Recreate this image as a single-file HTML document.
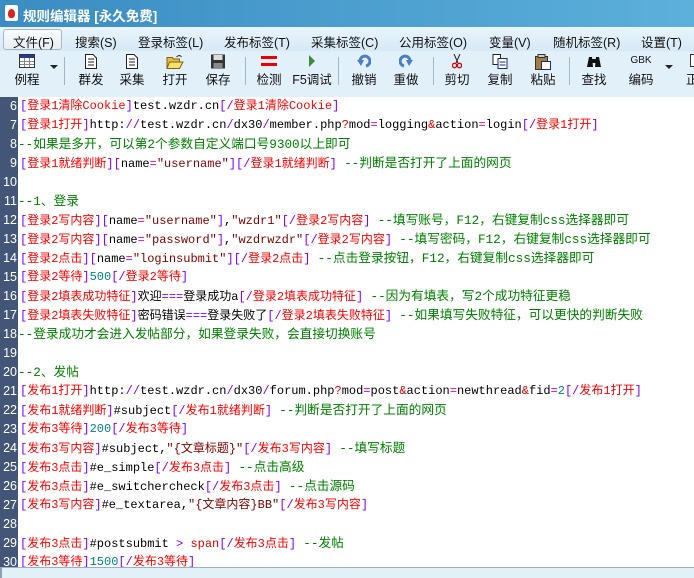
<!DOCTYPE html>
<html><head><meta charset="utf-8">
<style>
*{margin:0;padding:0;box-sizing:border-box}
body{width:694px;height:578px;overflow:hidden;background:#fff;font-family:"Liberation Sans","Noto Sans CJK SC",sans-serif;position:relative}
#title{position:absolute;left:0;top:0;width:694px;height:27px;background:linear-gradient(90deg,#3a8cc2,#5cb0da);color:#fff;font-weight:bold;font-size:13.5px}
#title .ic{position:absolute;left:5px;top:5px;width:13px;height:16px;background:#fff;border-radius:2px}
#title .ic:after{content:"";position:absolute;left:3px;top:4px;width:7px;height:9px;background:#d22;border-radius:50% 50% 40% 40%}
#title span{position:absolute;left:23px;top:5px}
#menu{position:absolute;left:0;top:27px;width:694px;height:24px;background:linear-gradient(#eaf4fb,#d6e9f6);font-size:12.5px;color:#111}
#menu span{position:absolute;top:5px;white-space:nowrap}
#menu .sel{position:absolute;left:3px;top:2px;width:59px;height:21px;border:1px solid #a9b6c2;border-radius:3px;background:linear-gradient(#fafcfe,#e8eef3)}
#tool{position:absolute;left:0;top:51px;width:694px;height:46px;background:#e2f0f9;font-size:12.5px;color:#111}
#tool .l{position:absolute;top:18px;white-space:nowrap;transform:translateX(-50%)}
#tool .i{position:absolute;top:3px;transform:translateX(-50%)}
#tool .sep{position:absolute;top:6px;width:1px;height:28px;background:#9fb6c8}
#tool .dd{position:absolute;top:14px;width:0;height:0;border-left:4px solid transparent;border-right:4px solid transparent;border-top:4px solid #222}
#ed{position:absolute;left:0;top:97px;width:694px;height:470px;background:#fff;overflow:hidden}
#gut{position:absolute;left:0;top:0;width:18px;height:470px;background:#435678}
.ln{position:absolute;left:0;height:19px;line-height:19px;font-family:"Liberation Mono","Noto Sans CJK SC",monospace;font-size:12px;white-space:pre}
.ln .no{position:absolute;left:0;width:17px;text-align:right;color:#fff;font-family:"Liberation Sans",sans-serif;font-size:12.5px}
.ln .tx{position:absolute;left:20px}
.b{color:#8000ff}.r{color:#f00}.k{color:#000}.s{color:#800000}.g{color:#008000;font-size:12.7px}.n{color:#008080}.p{color:#e000e0}.q{color:#e00000}
#bot{position:absolute;left:0;top:567px;width:694px;height:11px;background:#e2f0f8;border-top:1px solid #9db0c0;border-left:2px solid #8da0b0;overflow:hidden}
#bot span{position:absolute;top:8px;left:10px;font-size:12px;color:#555;white-space:pre}
</style></head><body>
<div id="title"><div class="ic"></div><span>规则编辑器 [永久免费]</span></div>
<div id="menu"><div class="sel"></div>
<span style="left:13px">文件(F)</span><span style="left:75px">搜索(S)</span><span style="left:138px">登录标签(L)</span><span style="left:224px">发布标签(T)</span><span style="left:311px">采集标签(C)</span><span style="left:399px">公用标签(O)</span><span style="left:489px">变量(V)</span><span style="left:553px">随机标签(R)</span><span style="left:641px">设置(T)</span></div>
<div id="tool">
<svg class="i" style="left:27px" width="16" height="14"><rect x="0.5" y="0.5" width="15" height="13" fill="#fff" stroke="#333"/><rect x="1" y="1" width="14" height="3" fill="#2a3a8a"/><path d="M1 7.5H15M1 10.5H15M5.5 4V13M10.5 4V13" stroke="#888"/></svg>
<span class="l" style="left:27px">例程</span><div class="dd" style="left:50px"></div><div class="sep" style="left:64px"></div>
<svg class="i" style="left:91px" width="12" height="15"><path d="M0.5 0.5H8L11.5 4V14.5H0.5Z" fill="#fff" stroke="#222"/><path d="M3 5H9M3 8H9M3 11H9" stroke="#222"/></svg><span class="l" style="left:91px">群发</span>
<svg class="i" style="left:132px" width="12" height="15"><path d="M0.5 0.5H8L11.5 4V14.5H0.5Z" fill="#fff" stroke="#222"/><path d="M3 5H9M3 8H9M3 11H9" stroke="#222"/></svg><span class="l" style="left:132px">采集</span>
<svg class="i" style="left:175px" width="17" height="15"><path d="M0.5 3.5H6L7 5H13V14.5H0.5Z" fill="#e8c040" stroke="#806010"/><path d="M3 8H16.5L13 14.5H0.5Z" fill="#f6e070" stroke="#806010"/><path d="M10 3Q13 0 15 3" stroke="#333" fill="none"/></svg><span class="l" style="left:175px">打开</span>
<svg class="i" style="left:218px" width="15" height="15"><rect x="0.5" y="0.5" width="14" height="14" fill="#333"/><rect x="3" y="1" width="9" height="5" fill="#ddd"/><rect x="3" y="9" width="9" height="5" fill="#888"/></svg><span class="l" style="left:218px">保存</span>
<div class="sep" style="left:245px"></div>
<svg class="i" style="left:269px" width="16" height="14"><rect x="0" y="2" width="16" height="3" fill="#e00"/><rect x="0" y="9" width="16" height="3" fill="#e00"/></svg><span class="l" style="left:269px">检测</span>
<svg class="i" style="left:312px" width="8" height="14"><path d="M1 1L7 7L1 13Z" fill="#3a8a3a"/></svg><span class="l" style="left:312px">F5调试</span>
<div class="sep" style="left:338px"></div>
<svg class="i" style="left:364px" width="14" height="14"><path d="M3 8A5 5 0 1 1 9 12" stroke="#4a7ec8" stroke-width="3" fill="none"/><path d="M0 6L4 12L7 6Z" fill="#4a7ec8"/></svg><span class="l" style="left:364px">撤销</span>
<svg class="i" style="left:406px" width="14" height="14"><path d="M11 8A5 5 0 1 0 5 12" stroke="#4a7ec8" stroke-width="3" fill="none"/><path d="M14 6L10 12L7 6Z" fill="#4a7ec8"/></svg><span class="l" style="left:406px">重做</span>
<div class="sep" style="left:433px"></div>
<svg class="i" style="left:457px" width="10" height="15"><path d="M2 0L6 9M8 0L4 9" stroke="#222"/><circle cx="2.5" cy="11.5" r="2.2" fill="none" stroke="#d00" stroke-width="1.3"/><circle cx="7.5" cy="11.5" r="2.2" fill="none" stroke="#d00" stroke-width="1.3"/></svg><span class="l" style="left:457px">剪切</span>
<svg class="i" style="left:500px" width="15" height="15"><path d="M0.5 0.5H8V10.5H0.5Z" fill="#fff" stroke="#222"/><path d="M5.5 4.5H14.5V14.5H5.5Z" fill="#fff" stroke="#1a2a8a"/><path d="M7 8H13M7 11H13" stroke="#1a2a8a"/></svg><span class="l" style="left:500px">复制</span>
<svg class="i" style="left:543px" width="16" height="16"><rect x="0.5" y="2.5" width="12" height="13" fill="#a08040" stroke="#333"/><rect x="3" y="0.5" width="7" height="3" fill="#ccc" stroke="#333"/><path d="M6.5 7.5H15.5V15.5H6.5Z" fill="#fff" stroke="#1a2a8a"/></svg><span class="l" style="left:543px">粘贴</span>
<div class="sep" style="left:569px"></div>
<svg class="i" style="left:594px" width="16" height="14"><path d="M1 13L3 3H6L7 13ZM9 13L10 3H13L15 13Z" fill="#111"/><rect x="5" y="5" width="6" height="4" fill="#111"/></svg><span class="l" style="left:594px">查找</span>
<span class="i" style="left:641px;top:4px;font-size:10px">GBK</span><span class="l" style="left:641px">编码</span><div class="dd" style="left:665px"></div>
<svg class="i" style="left:690px;transform:none" width="6" height="14"><rect x="0.5" y="0.5" width="8" height="12" fill="#fff" stroke="#333"/></svg><span class="l" style="left:686px;transform:none">正</span>
</div>
<div id="ed"><div id="gut"></div>
<div class="ln" style="top:0"><span class="no">6</span><span class="tx"><span class="b">[</span><span class="r">登录1清除Cookie</span><span class="b">]</span><span class="k">test.wzdr.cn</span><span class="b">[/</span><span class="r">登录1清除Cookie</span><span class="b">]</span></span></div>
<div class="ln" style="top:19px"><span class="no">7</span><span class="tx"><span class="b">[</span><span class="r">登录1打开</span><span class="b">]</span><span class="k">http:</span><span class="b">//</span><span class="k">test.wzdr.cn</span><span class="b">/</span><span class="k">dx30</span><span class="b">/</span><span class="k">member.php</span><span class="q">?</span><span class="k">mod</span><span class="p">=</span><span class="k">logging</span><span class="q">&amp;</span><span class="k">action</span><span class="p">=</span><span class="k">login</span><span class="b">[/</span><span class="r">登录1打开</span><span class="b">]</span></span></div>
<div class="ln" style="top:38px"><span class="no">8</span><span class="tx" style="left:18px"><span class="g">--如果是多开，可以第2个参数自定义端口号9300以上即可</span></span></div>
<div class="ln" style="top:57px"><span class="no">9</span><span class="tx"><span class="b">[</span><span class="r">登录1就绪判断</span><span class="b">][</span><span class="k">name</span><span class="p">=</span><span class="s">"username"</span><span class="b">][/</span><span class="r">登录1就绪判断</span><span class="b">]</span> <span class="g">--判断是否打开了上面的网页</span></span></div>
<div class="ln" style="top:76px"><span class="no">10</span></div>
<div class="ln" style="top:95px"><span class="no">11</span><span class="tx" style="left:18px"><span class="g">--1、登录</span></span></div>
<div class="ln" style="top:114px"><span class="no">12</span><span class="tx"><span class="b">[</span><span class="r">登录2写内容</span><span class="b">][</span><span class="k">name</span><span class="p">=</span><span class="s">"username"</span><span class="b">]</span><span class="k">,</span><span class="s">"wzdr1"</span><span class="b">[/</span><span class="r">登录2写内容</span><span class="b">]</span> <span class="g">--填写账号，F12，右键复制css选择器即可</span></span></div>
<div class="ln" style="top:133px"><span class="no">13</span><span class="tx"><span class="b">[</span><span class="r">登录2写内容</span><span class="b">][</span><span class="k">name</span><span class="p">=</span><span class="s">"password"</span><span class="b">]</span><span class="k">,</span><span class="s">"wzdrwzdr"</span><span class="b">[/</span><span class="r">登录2写内容</span><span class="b">]</span> <span class="g">--填写密码，F12，右键复制css选择器即可</span></span></div>
<div class="ln" style="top:152px"><span class="no">14</span><span class="tx"><span class="b">[</span><span class="r">登录2点击</span><span class="b">][</span><span class="k">name</span><span class="p">=</span><span class="s">"loginsubmit"</span><span class="b">][/</span><span class="r">登录2点击</span><span class="b">]</span> <span class="g">--点击登录按钮，F12，右键复制css选择器即可</span></span></div>
<div class="ln" style="top:171px"><span class="no">15</span><span class="tx"><span class="b">[</span><span class="r">登录2等待</span><span class="b">]</span><span class="n">500</span><span class="b">[/</span><span class="r">登录2等待</span><span class="b">]</span></span></div>
<div class="ln" style="top:190px"><span class="no">16</span><span class="tx"><span class="b">[</span><span class="r">登录2填表成功特征</span><span class="b">]</span><span class="k">欢迎</span><span class="b">===</span><span class="k">登录成功a</span><span class="b">[/</span><span class="r">登录2填表成功特征</span><span class="b">]</span> <span class="g">--因为有填表，写2个成功特征更稳</span></span></div>
<div class="ln" style="top:209px"><span class="no">17</span><span class="tx"><span class="b">[</span><span class="r">登录2填表失败特征</span><span class="b">]</span><span class="k">密码错误</span><span class="b">===</span><span class="k">登录失败了</span><span class="b">[/</span><span class="r">登录2填表失败特征</span><span class="b">]</span> <span class="g">--如果填写失败特征，可以更快的判断失败</span></span></div>
<div class="ln" style="top:228px"><span class="no">18</span><span class="tx" style="left:18px"><span class="g">--登录成功才会进入发帖部分，如果登录失败，会直接切换账号</span></span></div>
<div class="ln" style="top:247px"><span class="no">19</span></div>
<div class="ln" style="top:266px"><span class="no">20</span><span class="tx" style="left:18px"><span class="g">--2、发帖</span></span></div>
<div class="ln" style="top:285px"><span class="no">21</span><span class="tx"><span class="b">[</span><span class="r">发布1打开</span><span class="b">]</span><span class="k">http:</span><span class="b">//</span><span class="k">test.wzdr.cn</span><span class="b">/</span><span class="k">dx30</span><span class="b">/</span><span class="k">forum.php</span><span class="q">?</span><span class="k">mod</span><span class="p">=</span><span class="k">post</span><span class="q">&amp;</span><span class="k">action</span><span class="p">=</span><span class="k">newthread</span><span class="q">&amp;</span><span class="k">fid</span><span class="p">=</span><span class="n">2</span><span class="b">[/</span><span class="r">发布1打开</span><span class="b">]</span></span></div>
<div class="ln" style="top:304px"><span class="no">22</span><span class="tx"><span class="b">[</span><span class="r">发布1就绪判断</span><span class="b">]</span><span class="k">#subject</span><span class="b">[/</span><span class="r">发布1就绪判断</span><span class="b">]</span> <span class="g">--判断是否打开了上面的网页</span></span></div>
<div class="ln" style="top:323px"><span class="no">23</span><span class="tx"><span class="b">[</span><span class="r">发布3等待</span><span class="b">]</span><span class="n">200</span><span class="b">[/</span><span class="r">发布3等待</span><span class="b">]</span></span></div>
<div class="ln" style="top:342px"><span class="no">24</span><span class="tx"><span class="b">[</span><span class="r">发布3写内容</span><span class="b">]</span><span class="k">#subject,</span><span class="s">"{文章标题}"</span><span class="b">[/</span><span class="r">发布3写内容</span><span class="b">]</span> <span class="g">--填写标题</span></span></div>
<div class="ln" style="top:361px"><span class="no">25</span><span class="tx"><span class="b">[</span><span class="r">发布3点击</span><span class="b">]</span><span class="k">#e_simple</span><span class="b">[/</span><span class="r">发布3点击</span><span class="b">]</span> <span class="g">--点击高级</span></span></div>
<div class="ln" style="top:380px"><span class="no">26</span><span class="tx"><span class="b">[</span><span class="r">发布3点击</span><span class="b">]</span><span class="k">#e_switchercheck</span><span class="b">[/</span><span class="r">发布3点击</span><span class="b">]</span> <span class="g">--点击源码</span></span></div>
<div class="ln" style="top:399px"><span class="no">27</span><span class="tx"><span class="b">[</span><span class="r">发布3写内容</span><span class="b">]</span><span class="k">#e_textarea,</span><span class="s">"{文章内容}BB"</span><span class="b">[/</span><span class="r">发布3写内容</span><span class="b">]</span></span></div>
<div class="ln" style="top:418px"><span class="no">28</span></div>
<div class="ln" style="top:437px"><span class="no">29</span><span class="tx"><span class="b">[</span><span class="r">发布3点击</span><span class="b">]</span><span class="k">#postsubmit</span> <span class="b">&gt;</span> <span class="q">span</span><span class="b">[/</span><span class="r">发布3点击</span><span class="b">]</span> <span class="g">--发帖</span></span></div>
<div class="ln" style="top:456px"><span class="no">30</span><span class="tx"><span class="b">[</span><span class="r">发布3等待</span><span class="b">]</span><span class="n">1500</span><span class="b">[/</span><span class="r">发布3等待</span><span class="b">]</span></span></div>
</div>
<div id="bot"><span>[登录]页面    (   )    [登录]判断        [登录]    [登录]地址    [登录地址]  [登录地址码]    [登录地址码]</span></div>
</body></html>
